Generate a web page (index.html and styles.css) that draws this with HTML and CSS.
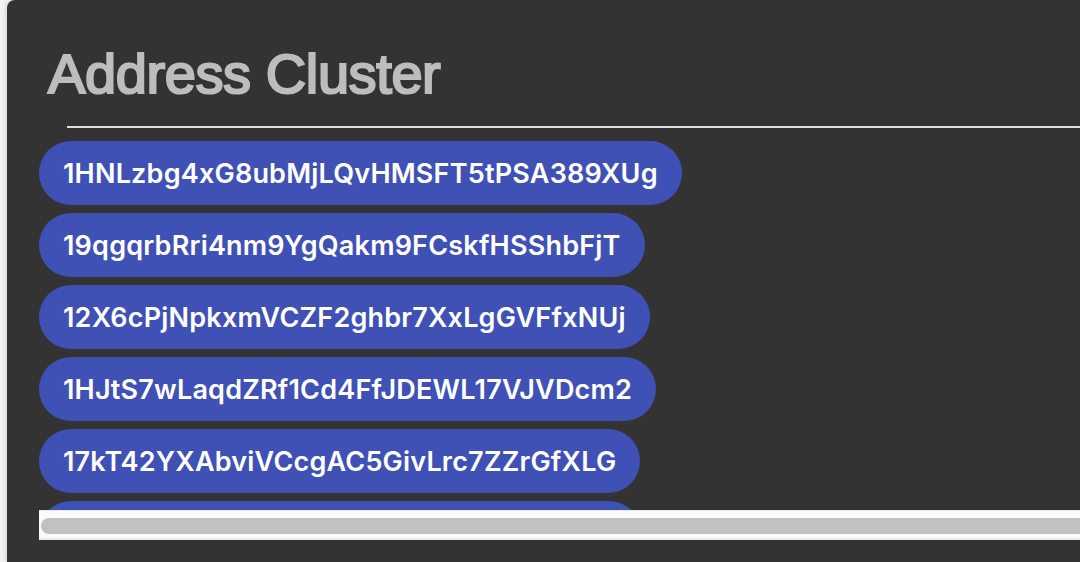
FILE: index.html
```html
<!DOCTYPE html>
<html lang="en">
<head>
<meta charset="utf-8">
<title>Address Cluster</title>
<link rel="stylesheet" href="styles.css">
</head>
<body>
  <main class="card">
    <h1 class="title">Address Cluster</h1>
    <hr class="divider">
    <div class="scroller">
      <div class="viewport">
        <ul class="chips">
          <li class="chip">1HNLzbg4xG8ubMjLQvHMSFT5tPSA389XUg</li>
          <li class="chip">19qgqrbRri4nm9YgQakm9FCskfHSShbFjT</li>
          <li class="chip">12X6cPjNpkxmVCZF2ghbr7XxLgGVFfxNUj</li>
          <li class="chip">1HJtS7wLaqdZRf1Cd4FfJDEWL17VJVDcm2</li>
          <li class="chip">17kT42YXAbviVCcgAC5GivLrc7ZZrGfXLG</li>
          <li class="chip">1BoatSLRHtKNngkdXEeobR76b53LETtpyT</li>
        </ul>
      </div>
      <div class="hbar" aria-hidden="true"><div class="hbar-thumb"></div></div>
    </div>
  </main>
</body>
</html>
```
FILE: styles.css
```css
html, body {
  margin: 0;
  padding: 0;
  height: 100%;
  overflow: hidden;
  background: #f2f2f2;
}

.card {
  margin-left: 7px;
  height: 562px;
  background: #333333;
  border-radius: 8px 0 0 0;
  box-shadow: 0 0 6px rgba(0, 0, 0, 0.18);
  padding-top: 46px;
  box-sizing: border-box;
  overflow: hidden;
}

.title {
  margin: 0 0 0 41px;
  font-family: "Liberation Sans", Arial, sans-serif;
  font-weight: 400;
  font-size: 56px;
  line-height: 56px;
  letter-spacing: -0.4px;
  color: #bdbdbd;
  -webkit-text-stroke: 2.2px #bdbdbd;
}

.divider {
  margin: 24px 0 0 60px;
  border: 0;
  height: 2px;
  background: #e0e0e0;
}

.scroller {
  margin: 13px 0 0 32px;
  display: flex;
  flex-direction: column;
}

.viewport {
  height: 369px;
  overflow: hidden;
}

.hbar {
  height: 30px;
  box-sizing: border-box;
  background: #fafafa;
  border-top: 1px solid #ebebeb;
  border-bottom: 2px solid #ebebeb;
  padding: 7px 0 4px 2px;
}

.hbar-thumb {
  height: 16px;
  width: 1200px;
  background: #c1c1c1;
  border-radius: 8px;
}

.chips {
  list-style: none;
  margin: 0;
  padding: 0;
  display: flex;
  flex-direction: column;
  align-items: flex-start;
  gap: 8px;
}

.chip {
  display: flex;
  align-items: center;
  height: 64px;
  padding: 0 24px;
  border-radius: 32px;
  background: #3f51b5;
  color: #ffffff;
  font-family: Inter, "Noto Sans", sans-serif;
  font-weight: 600;
  font-size: 27px;
  letter-spacing: 0.2px;
  white-space: nowrap;
}
```
